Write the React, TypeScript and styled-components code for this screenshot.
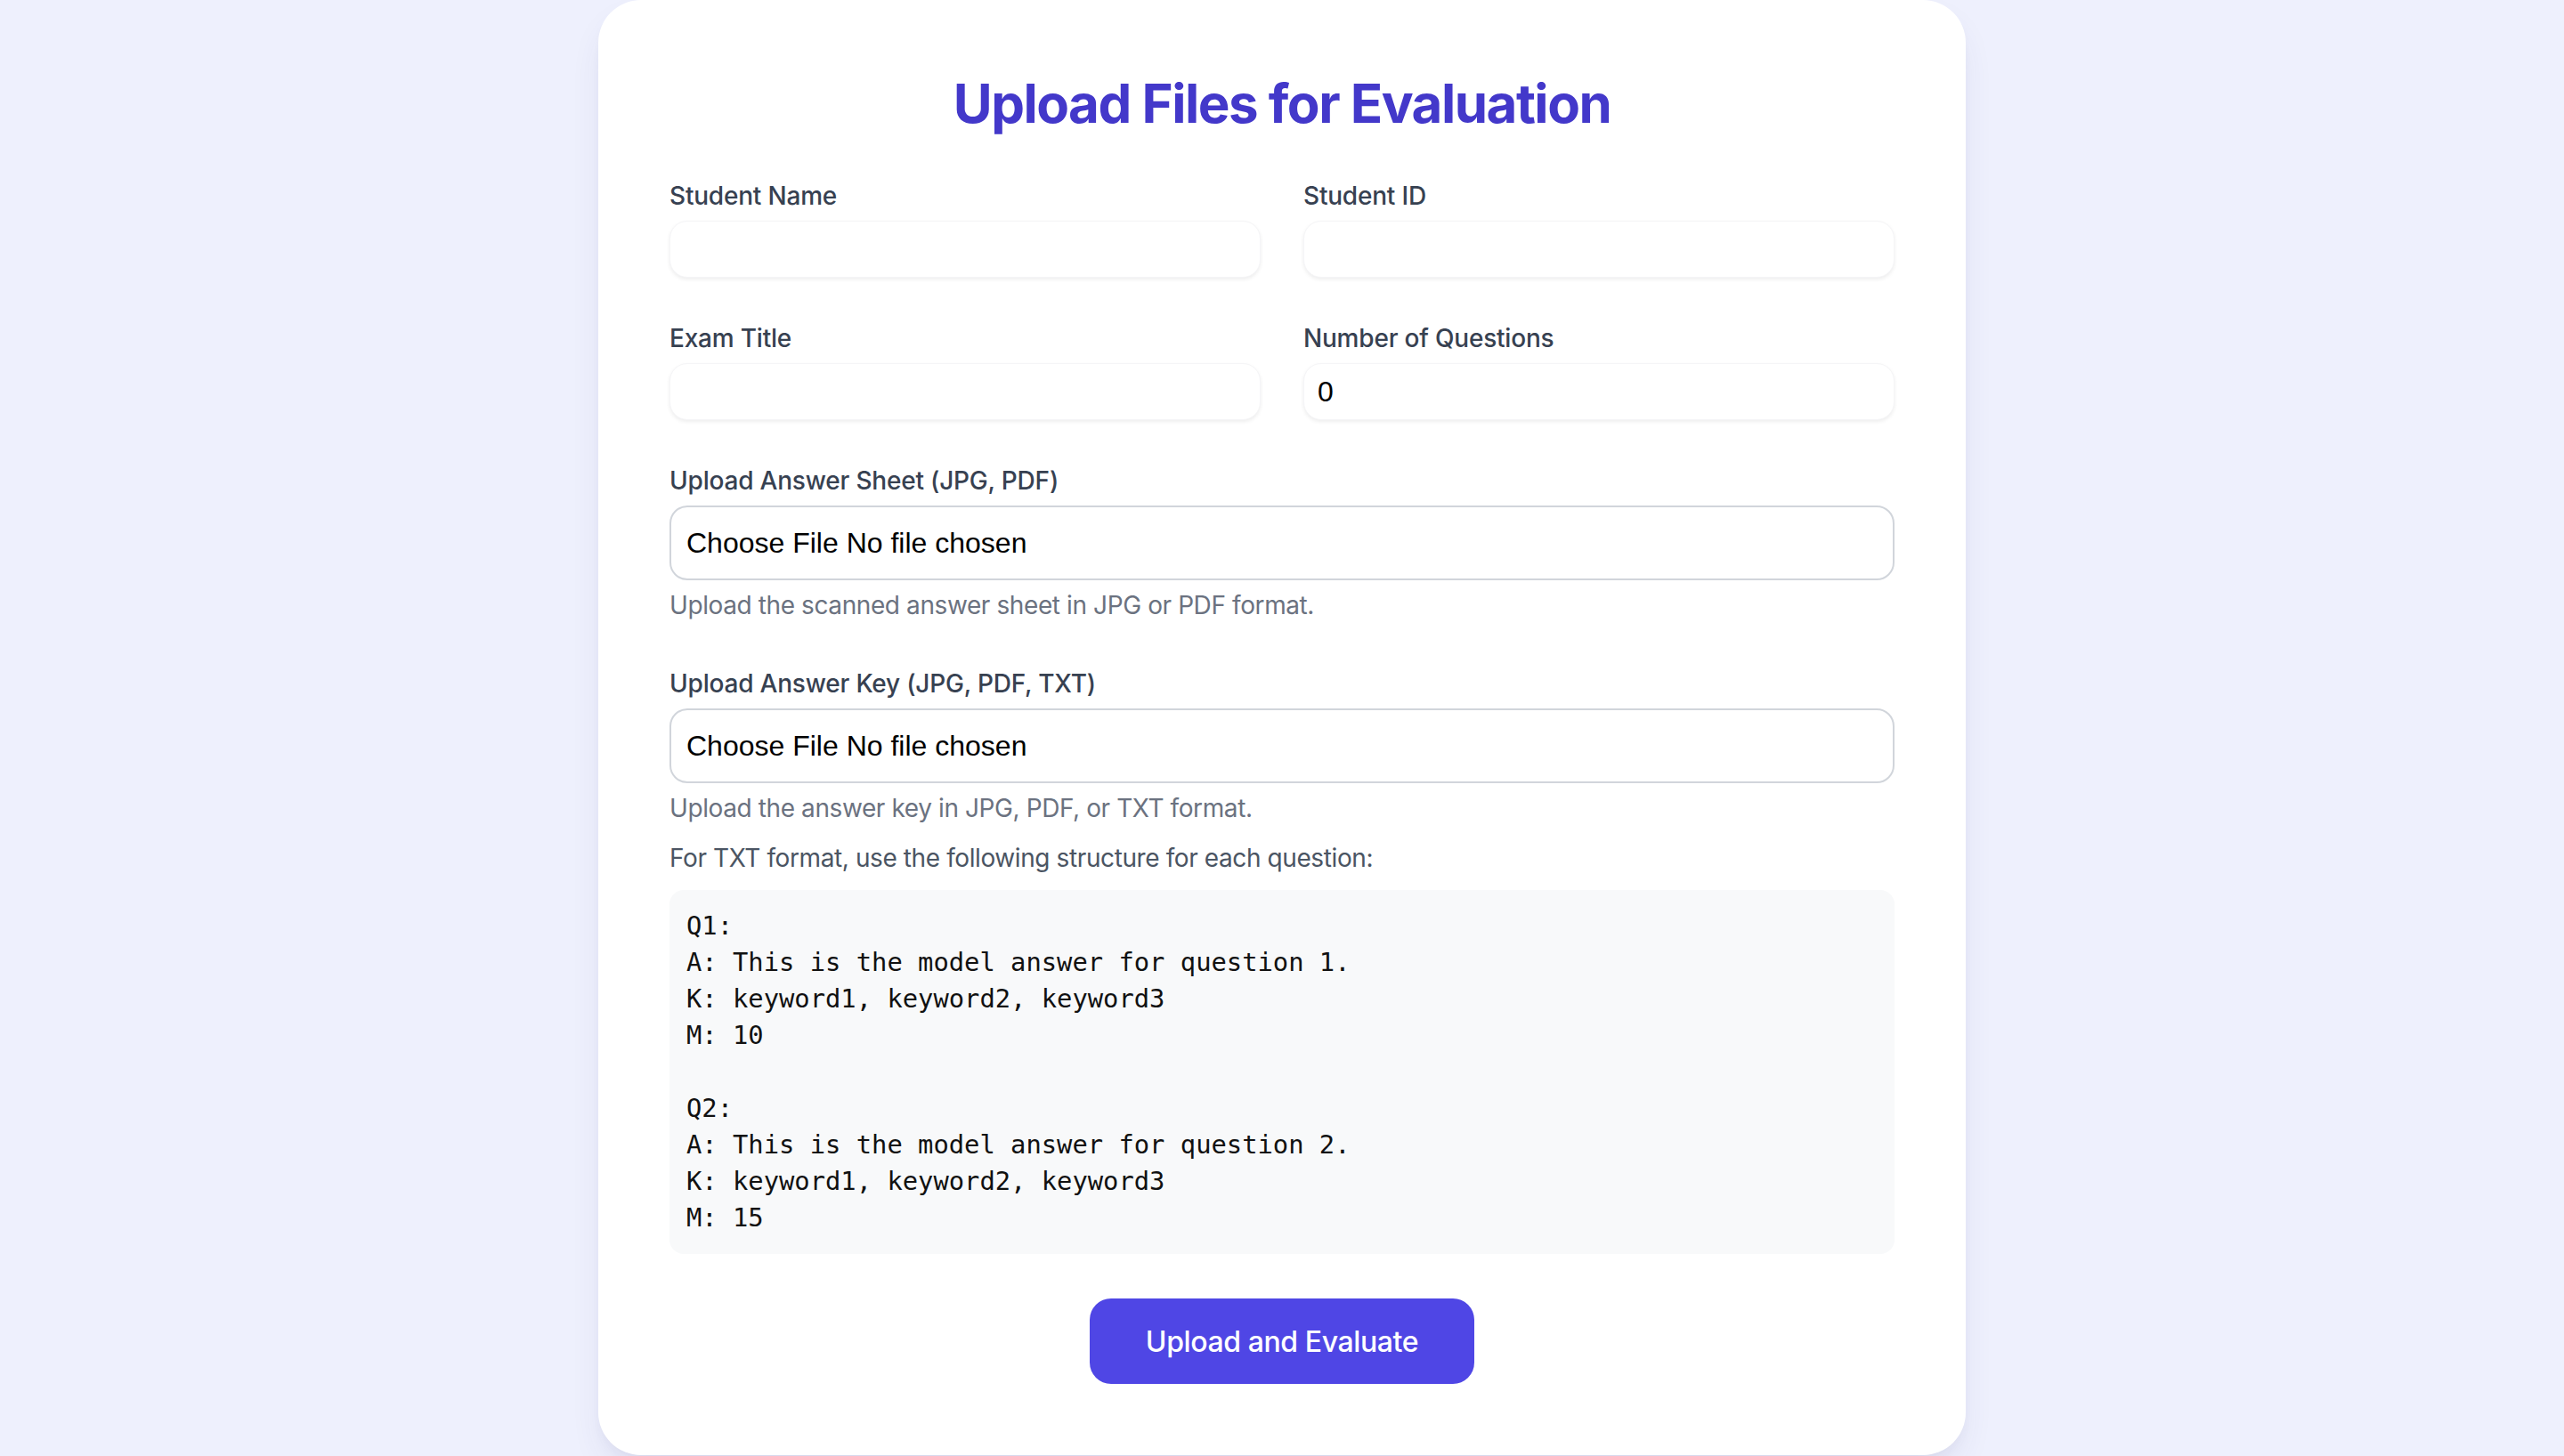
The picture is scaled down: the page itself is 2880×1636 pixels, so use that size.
import React from "react";
import styled, { createGlobalStyle } from "styled-components";

const GlobalStyle = createGlobalStyle`
  html, body {
    margin: 0;
    padding: 0;
    background: #eef0fd;
    font-family: Inter, "Noto Sans", sans-serif;
  }
  * { box-sizing: border-box; }
`;

const Page = styled.div`
  min-height: 1636px;
  display: flex;
  justify-content: center;
  align-items: flex-start;
`;

const Card = styled.div`
  width: 1536px;
  background: #ffffff;
  border-radius: 48px;
  padding: 80px;
  box-shadow: 0 20px 40px -10px rgba(60, 60, 120, 0.12), 0 8px 16px -8px rgba(60, 60, 120, 0.08);
`;

const Title = styled.h1`
  margin: 0 0 48px;
  text-align: center;
  font-size: 60px;
  line-height: 72px;
  font-weight: 700;
  color: #4338ca;
  letter-spacing: -1.5px;
`;

const Form = styled.form`
  display: flex;
  flex-direction: column;
  gap: 48px;
`;

const Grid = styled.div`
  display: grid;
  grid-template-columns: 1fr 1fr;
  gap: 48px;
`;

const Field = styled.div`
  display: flex;
  flex-direction: column;
`;

const Label = styled.label`
  font-size: 28px;
  line-height: 40px;
  font-weight: 500;
  color: #374151;
  margin-bottom: 8px;
  letter-spacing: -0.2px;
`;

const TextInput = styled.input`
  height: 64px;
  width: 100%;
  border: 1px solid #f5f5f7;
  border-radius: 20px;
  padding: 0 15px;
  font-family: "Liberation Sans", Arial, sans-serif;
  font-size: 32px;
  color: #000;
  background: #fff;
  box-shadow: 0 2px 4px rgba(0, 0, 0, 0.07);
  outline: none;
`;

const FileBox = styled.label`
  display: flex;
  align-items: center;
  height: 84px;
  border: 2px solid #d1d5db;
  border-radius: 20px;
  padding: 0 17px;
  font-family: "Liberation Sans", Arial, sans-serif;
  font-size: 32px;
  color: #000;
  cursor: pointer;
  input { display: none; }
`;

const Hint = styled.p<{ $tone?: "muted" | "dark"; $gap?: number }>`
  margin: ${(p) => p.$gap ?? 8}px 0 0;
  font-size: 28px;
  line-height: 40px;
  letter-spacing: -0.4px;
  color: ${(p) => (p.$tone === "dark" ? "#4b5563" : "#6b7280")};
`;

const Code = styled.pre`
  margin: 16px 0 0;
  padding: 20px 19px;
  background: #f8f9fa;
  border-radius: 16px;
  font-family: "DejaVu Sans Mono", "Liberation Mono", monospace;
  font-size: 28.8px;
  line-height: 41px;
  color: #111;
`;

const Actions = styled.div`
  display: flex;
  justify-content: center;
  padding-top: 2px;
`;

const Button = styled.button`
  height: 96px;
  padding: 0 63px;
  border: none;
  border-radius: 24px;
  background: #4f46e5;
  color: #fff;
  font-family: Inter, sans-serif;
  font-size: 32px;
  font-weight: 500;
  letter-spacing: -0.4px;
  cursor: pointer;
`;

const codeText = `Q1:
A: This is the model answer for question 1.
K: keyword1, keyword2, keyword3
M: 10

Q2:
A: This is the model answer for question 2.
K: keyword1, keyword2, keyword3
M: 15`;

export default function App() {
  return (
    <>
      <GlobalStyle />
      <Page>
        <Card>
          <Title>Upload Files for Evaluation</Title>
          <Form onSubmit={(e) => e.preventDefault()}>
            <Grid>
              <Field>
                <Label>Student Name</Label>
                <TextInput type="text" />
              </Field>
              <Field>
                <Label>Student ID</Label>
                <TextInput type="text" />
              </Field>
              <Field>
                <Label>Exam Title</Label>
                <TextInput type="text" />
              </Field>
              <Field>
                <Label>Number of Questions</Label>
                <TextInput type="number" defaultValue={0} />
              </Field>
            </Grid>
            <Field>
              <Label>Upload Answer Sheet (JPG, PDF)</Label>
              <FileBox>
                <input type="file" />
                Choose File No file chosen
              </FileBox>
              <Hint>Upload the scanned answer sheet in JPG or PDF format.</Hint>
            </Field>
            <Field>
              <Label>Upload Answer Key (JPG, PDF, TXT)</Label>
              <FileBox>
                <input type="file" />
                Choose File No file chosen
              </FileBox>
              <Hint>Upload the answer key in JPG, PDF, or TXT format.</Hint>
              <Hint $tone="dark" $gap={16}>
                For TXT format, use the following structure for each question:
              </Hint>
              <Code>{codeText}</Code>
            </Field>
            <Actions>
              <Button type="submit">Upload and Evaluate</Button>
            </Actions>
          </Form>
        </Card>
      </Page>
    </>
  );
}
